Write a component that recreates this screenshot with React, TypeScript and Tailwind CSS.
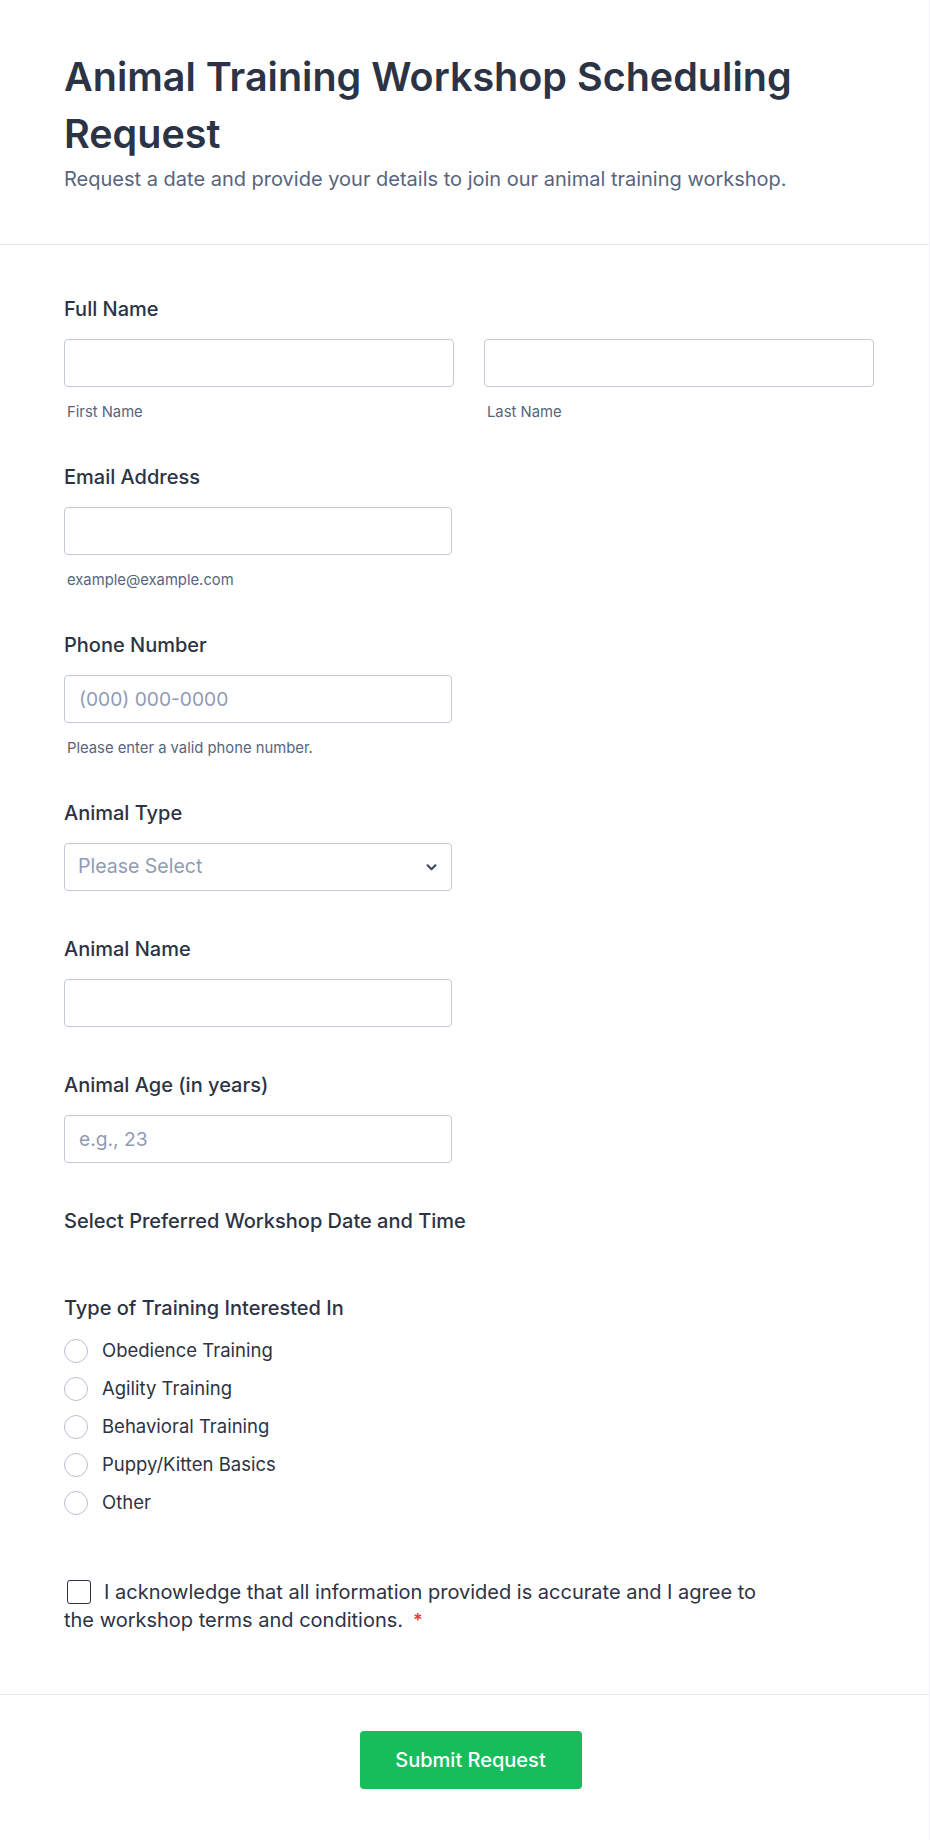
import React from "react";

const font = { fontFamily: "Inter, 'Noto Sans', sans-serif" };

function Label({ children }: { children: React.ReactNode }) {
  return (
    <div className="text-[20px] leading-[28px] font-medium text-[#2c3345]">
      {children}
    </div>
  );
}

function Helper({ children }: { children: React.ReactNode }) {
  return (
    <div className="mt-[18px] pl-[3px] text-[14.8px] leading-[14px] text-[#57647e]">
      {children}
    </div>
  );
}

function TextInput({ placeholder }: { placeholder?: string }) {
  return (
    <input
      type="text"
      placeholder={placeholder}
      className="block w-full h-[48px] px-[14px] rounded-[4px] border border-[#c3cad8] bg-white text-[19.2px] text-[#2c3345] placeholder:text-[#8f9bb3] outline-none"
    />
  );
}

const trainingTypes = [
  "Obedience Training",
  "Agility Training",
  "Behavioral Training",
  "Puppy/Kitten Basics",
  "Other",
];

export default function App() {
  return (
    <div className="min-h-screen bg-white border-r border-[#f1f1f6]" style={font}>
      {/* header */}
      <div className="pl-16 pr-[55px] pt-[49px] pb-[51px] border-b border-[#e3e5ef]">
        <h1 className="text-[39.5px] leading-[57px] font-semibold text-[#2c3345]">
          Animal Training Workshop Scheduling Request
        </h1>
        <p className="mt-[2px] text-[20px] leading-[28px] text-[#57647e]">
          Request a date and provide your details to join our animal training workshop.
        </p>
      </div>

      {/* form body */}
      <div className="pl-16 pr-[55px] pt-[50px] pb-[60px] flex flex-col gap-[44px]">
        <div>
          <Label>Full Name</Label>
          <div className="mt-4 grid grid-cols-2 gap-[30px]">
            <div>
              <TextInput />
              <Helper>First Name</Helper>
            </div>
            <div>
              <TextInput />
              <Helper>Last Name</Helper>
            </div>
          </div>
        </div>

        <div className="w-[388px]">
          <Label>Email Address</Label>
          <div className="mt-4">
            <TextInput />
          </div>
          <Helper>example@example.com</Helper>
        </div>

        <div className="w-[388px]">
          <Label>Phone Number</Label>
          <div className="mt-4">
            <TextInput placeholder="(000) 000-0000" />
          </div>
          <Helper>Please enter a valid phone number.</Helper>
        </div>

        <div className="w-[388px]">
          <Label>Animal Type</Label>
          <div className="mt-4">
            <div className="flex items-center justify-between h-[48px] pl-[13px] pr-[14px] rounded-[4px] border border-[#c3cad8] bg-white">
              <span className="text-[19.5px] text-[#8f9bb3]">Please Select</span>
              <svg width="11" height="7" viewBox="0 0 12 8" fill="none">
                <path d="M1.5 1.5L6 6L10.5 1.5" stroke="#3e4862" strokeWidth="2.4" strokeLinecap="round" strokeLinejoin="round" />
              </svg>
            </div>
          </div>
        </div>

        <div className="w-[388px]">
          <Label>Animal Name</Label>
          <div className="mt-4">
            <TextInput />
          </div>
        </div>

        <div className="w-[388px]">
          <Label>Animal Age (in years)</Label>
          <div className="mt-4">
            <TextInput placeholder="e.g., 23" />
          </div>
        </div>

        <div className="pb-[15px]">
          <Label>Select Preferred Workshop Date and Time</Label>
        </div>

        <div>
          <Label>Type of Training Interested In</Label>
          <div className="mt-[10px] flex flex-col">
            {trainingTypes.map((t) => (
              <label key={t} className="flex items-center gap-[14px] h-[38px]">
                <span className="w-6 h-6 rounded-full border border-[#b8bfcc] bg-white" />
                <span className="text-[18.5px] text-[#2c3345]">{t}</span>
              </label>
            ))}
          </div>
        </div>

        <div className="mt-[12px] max-w-[700px] text-[20px] leading-[28px] text-[#2c3345]">
          <span className="inline-block align-[-5px] w-6 h-6 ml-[3px] mr-[13px] rounded-[3px] border-[1.5px] border-[#2c3345] bg-white" />
          I acknowledge that all information provided is accurate and I agree to the workshop terms and conditions.
          <span className="ml-[10px] text-[#f23a3c] font-semibold text-[18px] leading-[20px]">*</span>
        </div>
      </div>

      {/* footer */}
      <div className="border-t border-[#e6e7ef] pl-[67px] pr-[55px] pt-[36px] pb-[50px] flex justify-center">
        <button className="w-[222px] h-[58px] rounded-[4px] bg-[#18bd5b] text-white text-[20px] font-medium">
          Submit Request
        </button>
      </div>
    </div>
  );
}
